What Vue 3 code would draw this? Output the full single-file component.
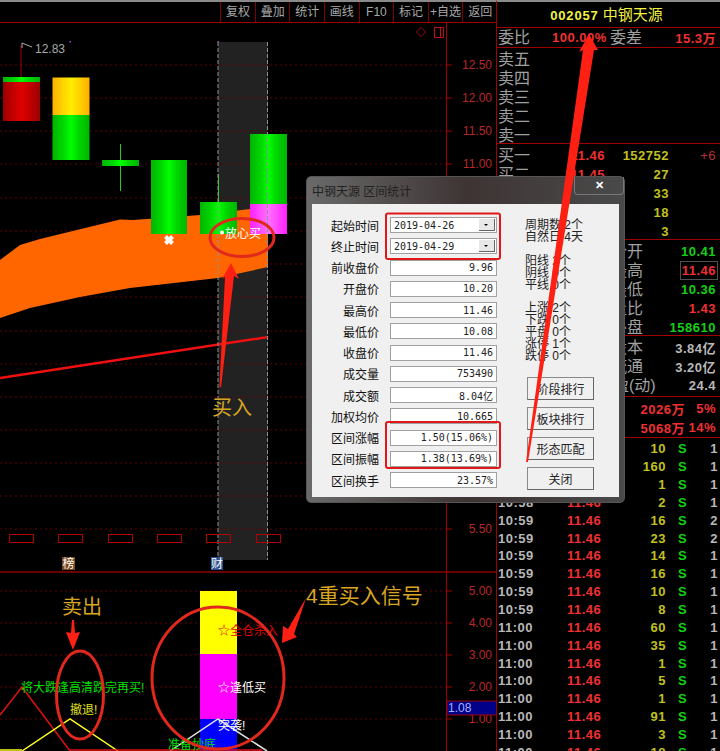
<script setup>
const tools = ['复权', '叠加', '统计', '画线', 'F10', '标记', '+自选', '返回']

// 左侧K线
const gridLines = [65, 98, 131, 164, 198, 231, 264, 297, 331, 364, 397, 430, 463, 496, 529]
const subLines = [591, 623, 655, 687, 719]
const priceLabels = [
  { y: 65, t: '12.50' }, { y: 98, t: '12.00' }, { y: 131, t: '11.50' }, { y: 164, t: '11.00' }, { y: 529, t: '5.50' },
  { y: 591, t: '5.00' }, { y: 623, t: '4.00' }, { y: 655, t: '3.00' }, { y: 687, t: '2.00' }, { y: 719, t: '1.00' }
]
const markers = [9, 58, 108, 157, 206, 256]

// 右侧盘口
const sells = ['卖五', '卖四', '卖三', '卖二', '卖一']
const buys = [
  { name: '买一', price: '11.46', vol: '152752', diff: '+6' },
  { name: '买二', price: '11.45', vol: '27', diff: '' },
  { name: '买三', price: '11.44', vol: '33', diff: '' },
  { name: '买四', price: '11.43', vol: '18', diff: '' },
  { name: '买五', price: '11.42', vol: '3', diff: '' }
]
const quotes = [
  { name: '今开', val: '10.41', cls: 'green' },
  { name: '最高', val: '11.46', cls: 'red boxed' },
  { name: '最低', val: '10.36', cls: 'green' },
  { name: '量比', val: '1.43', cls: 'red' },
  { name: '外盘', val: '158610', cls: 'green' }
]
const ticks = [
  ['10:58', '10', 1], ['10:58', '160', 1], ['10:58', '1', 1], ['10:58', '2', 1],
  ['10:59', '16', 2], ['10:59', '23', 2], ['10:59', '14', 1], ['10:59', '16', 1],
  ['10:59', '10', 1], ['10:59', '8', 1], ['11:00', '60', 1], ['11:00', '35', 1],
  ['11:00', '1', 1], ['11:00', '5', 1], ['11:00', '1', 1], ['11:00', '91', 1],
  ['11:00', '3', 1], ['11:00', '18', 1]
]

// 区间统计弹窗
const fields = [
  { label: '起始时间', val: '2019-04-26', select: true },
  { label: '终止时间', val: '2019-04-29', select: true },
  { label: '前收盘价', val: '9.96' },
  { label: '开盘价', val: '10.20' },
  { label: '最高价', val: '11.46' },
  { label: '最低价', val: '10.08' },
  { label: '收盘价', val: '11.46' },
  { label: '成交量', val: '753490' },
  { label: '成交额', val: '8.04亿' },
  { label: '加权均价', val: '10.665' },
  { label: '区间涨幅', val: '1.50(15.06%)' },
  { label: '区间振幅', val: '1.38(13.69%)' },
  { label: '区间换手', val: '23.57%' }
]
const statGroups = [
  ['周期数 2个', '自然日 4天'],
  ['阳线 2个', '阴线 0个', '平线 0个'],
  ['上涨 2个', '下跌 0个', '平盘 0个', '涨停 1个', '跌停 0个']
]
const buttons = ['阶段排行', '板块排行', '形态匹配', '关闭']
</script>

<template>
  <div class="screen">
    <div class="left">
      <div class="toolbar">
        <span v-for="t in tools" :key="t" class="tool">{{ t }}</span>
      </div>
      <svg class="chart" width="497" height="728" viewBox="0 23 497 728">
        <defs>
          <linearGradient id="gGreen">
            <stop offset="0" stop-color="#00b400" />
            <stop offset="0.3" stop-color="#00d800" />
            <stop offset="0.5" stop-color="#00ff00" />
            <stop offset="0.7" stop-color="#00d800" />
            <stop offset="1" stop-color="#00b400" />
          </linearGradient>
          <linearGradient id="gRed">
            <stop offset="0" stop-color="#9c0000" />
            <stop offset="0.5" stop-color="#e00000" />
            <stop offset="1" stop-color="#9c0000" />
          </linearGradient>
          <linearGradient id="gGold">
            <stop offset="0" stop-color="#ffb000" />
            <stop offset="0.5" stop-color="#ffee00" />
            <stop offset="1" stop-color="#ffb000" />
          </linearGradient>
          <linearGradient id="gPink">
            <stop offset="0" stop-color="#ff20ff" />
            <stop offset="0.5" stop-color="#ff70ff" />
            <stop offset="1" stop-color="#ff20ff" />
          </linearGradient>
        </defs>

        <rect x="218" y="42" width="50" height="518" fill="#222" />

        <line v-for="y in gridLines" :key="y" x1="0" x2="446" :y1="y" :y2="y" class="dots" />
        <line v-for="y in subLines" :key="y" x1="0" x2="446" :y1="y" :y2="y" class="dots" />

        <polygon fill="#ff6600" points="0,260 20,245 40,239 120,219.5 133,220 200,215 250,209 268,205 268,267 218,278 130,288 80,297 30,308 0,318" />
        <line x1="0" y1="378" x2="268" y2="337" stroke="#f01010" stroke-width="2.5" />

        <line x1="21" y1="45" x2="21" y2="77" stroke="#a00000" />
        <rect x="3" y="77" width="37" height="5" fill="url(#gGreen)" />
        <rect x="3" y="82" width="37" height="39" fill="url(#gRed)" />
        <path d="M22 48 V43 M22 43 L32 47" stroke="#aaa" fill="none" />
        <text x="35" y="53" class="axis gray">12.83</text>
        <rect x="69.5" y="41" width="1.5" height="1.5" fill="#b030d0" />
        <rect x="217.5" y="41" width="1.5" height="1.5" fill="#b030d0" />

        <rect x="52.5" y="77.5" width="37" height="37.5" fill="url(#gGold)" />
        <rect x="52.5" y="115" width="37" height="45" fill="url(#gGreen)" />
        <line x1="120.5" y1="144" x2="120.5" y2="191" stroke="#20d020" />
        <rect x="102" y="160" width="37" height="6" fill="url(#gGreen)" />
        <rect x="151" y="160" width="36" height="74" fill="url(#gGreen)" />
        <line x1="218.5" y1="174" x2="218.5" y2="202" stroke="#20d020" />
        <rect x="200" y="202" width="37" height="32" fill="url(#gGreen)" />
        <rect x="250" y="134" width="37" height="70" fill="url(#gGreen)" />
        <rect x="250" y="204" width="37" height="30" fill="url(#gPink)" />

        <line x1="218" y1="42" x2="218" y2="560" class="band" />
        <line x1="267.5" y1="42" x2="267.5" y2="560" class="band" />

        <path d="M165.5 236.5 L172.5 243.5 M172.5 236.5 L165.5 243.5" stroke="#fff" stroke-width="4" />
        <circle cx="222" cy="232.5" r="2" fill="#fff" />
        <text x="225" y="238" class="sig" fill="#fff">放心买</text>

        <rect v-for="x in markers" :key="x" :x="x + 0.5" y="534.5" width="24" height="8" fill="none" stroke="#b00000" />

        <rect x="62" y="557" width="13" height="13" fill="#7a4518" />
        <text x="62.5" y="568" class="tag">榜</text>
        <rect x="211" y="557" width="12" height="13" fill="#2a5090" />
        <text x="211" y="568" class="tag">财</text>

        <line x1="0" y1="572" x2="497" y2="572" stroke="#8c0000" stroke-width="1.5" />

        <rect x="200" y="591" width="37" height="63" fill="#ffff00" />
        <rect x="200" y="654" width="37" height="65" fill="#ff00ff" />
        <rect x="200" y="719" width="37" height="32" fill="#0000ff" />

        <polyline points="0,715 22,687 70,751" fill="none" stroke="#e01010" stroke-width="1.5" />
        <polyline points="22,751 70,719 118,751" fill="none" stroke="#ffff20" stroke-width="1.5" />
        <polyline points="170,751 218,719 267,751" fill="none" stroke="#e0e0e0" stroke-width="1.5" />
        <line x1="70" y1="750" x2="262" y2="750" stroke="#e01010" stroke-width="1.5" />
        <line x1="0" y1="750" x2="22" y2="750" stroke="#ffff20" stroke-width="1.5" />

        <text x="218" y="635" class="sig" fill="#e00000">☆全仓杀入</text>
        <text x="218" y="692" class="sig" fill="#fff">☆逢低买</text>
        <text x="218" y="730" class="sig" fill="#fff">突袭!</text>
        <text x="168" y="749" class="sig" fill="#00e000">准备抄底</text>
        <text x="21" y="692" class="sig" fill="#00e000">将大跌逢高清跌完再买!</text>
        <text x="70" y="714" class="sig" fill="#e0e020">撤退!</text>

        <line x1="446.5" y1="23" x2="446.5" y2="751" stroke="#a00000" />
        <template v-for="p in priceLabels" :key="p.t">
          <line x1="446" x2="452" :y1="p.y" :y2="p.y" stroke="#a00000" />
          <text x="492" :y="p.y + 4" class="axis" text-anchor="end">{{ p.t }}</text>
        </template>

        <path d="M421 27.5 L425.5 32 L421 36.5 L416.5 32 Z" fill="none" stroke="#a01010" />
        <path d="M434.5 27.5 H443.5 V37.5 H434.5 Z M440.5 27.5 V37.5" fill="none" stroke="#c01010" />

        <rect x="447" y="701" width="50" height="14" fill="#000088" stroke="#a00000" />
        <text x="448" y="712" class="axis blue">1.08</text>
      </svg>
    </div>

    <div class="panel">
      <div class="title"><b>002057</b> 中钢天源</div>
      <div class="ratio">
        <span class="lb">委比</span>
        <span class="num red pct">100.00%</span>
        <span class="lb">委差</span>
        <span class="num red end">15.3万</span>
      </div>
      <div class="book sells">
        <div v-for="s in sells" :key="s" class="row"><span class="lb">{{ s }}</span></div>
      </div>
      <div class="book buys">
        <div v-for="b in buys" :key="b.name" class="row">
          <span class="lb">{{ b.name }}</span>
          <span class="num red b-price">{{ b.price }}</span>
          <span class="num olive b-vol">{{ b.vol }}</span>
          <span class="num dimred end">{{ b.diff }}</span>
        </div>
      </div>
      <div class="book quotes">
        <div v-for="q in quotes" :key="q.name" class="row half">
          <span class="lb">{{ q.name }}</span>
          <span class="num end" :class="q.cls">{{ q.val }}</span>
        </div>
      </div>
      <div class="book shares">
        <div class="row half"><span class="lb">股本</span><span class="num gray end">3.84亿</span></div>
        <div class="row half"><span class="lb">流通</span><span class="num gray end">3.20亿</span></div>
        <div class="row half pe"><span class="lb">市盈(动)</span><span class="num gray end">24.4</span></div>
      </div>
      <div class="book flows">
        <div class="row"><span class="num red flow">2026万</span><span class="num red end">5%</span></div>
        <div class="row"><span class="num red flow">5068万</span><span class="num red end">14%</span></div>
      </div>
      <div class="list">
        <div v-for="(t, i) in ticks" :key="i" class="tick">
          <span class="num gray t-time">{{ t[0] }}</span>
          <span class="num red t-price">11.46</span>
          <span class="num olive t-vol">{{ t[1] }}</span>
          <span class="num green t-s">S</span>
          <span class="num gray end">{{ t[2] }}</span>
        </div>
      </div>
    </div>

    <div class="dialog">
      <div class="caption">
        <span>中钢天源 区间统计</span>
        <span class="close">✕</span>
      </div>
      <div class="client">
        <div class="form">
          <template v-for="f in fields" :key="f.label">
            <label>{{ f.label }}</label>
            <div class="field" :class="{ select: f.select }">
              <span>{{ f.val }}</span>
              <i v-if="f.select" class="drop"></i>
            </div>
          </template>
        </div>
        <div class="side">
          <div v-for="(g, i) in statGroups" :key="i" class="stats">
            <div v-for="s in g" :key="s">{{ s }}</div>
          </div>
          <button v-for="b in buttons" :key="b" type="button">{{ b }}</button>
        </div>
      </div>
    </div>

    <svg class="marks" width="720" height="751" viewBox="0 0 720 751">
      <rect x="386" y="213.5" width="114" height="45.5" rx="2" class="box" />
      <rect x="386" y="422" width="114" height="46" rx="2" class="box" />
      <ellipse cx="242" cy="237.5" rx="32" ry="19" class="ring" />
      <ellipse cx="80" cy="695" rx="23.5" ry="44" class="ring" />
      <ellipse cx="218" cy="678" rx="66" ry="71" class="ring" />
      <polygon class="arrow" points="231,263 239,279 234,276 221,387 219.5,387 225,277 222,279" />
      <polygon class="arrow" points="73,650 66,632 71,633 72,620 74,620 75,633 80,632" />
      <polygon class="arrow" points="282,643 283,626 288,629 306,598 294,634 297,637" />
      <polygon class="arrow" points="589,34 598,50 594,50 528,462 526,462 583,50 579,52" />
      <text x="212" y="415" class="note" font-size="20">买入</text>
      <text x="62" y="614" class="note" font-size="20">卖出</text>
      <text x="306" y="603" class="note" font-size="21">4重买入信号</text>
    </svg>
  </div>
</template>

<style>
html, body {
  margin: 0;
  background: #000;
}
</style>

<style scoped>
.screen {
  position: relative;
  display: flex;
  width: 720px;
  height: 751px;
  overflow: hidden;
  background: #000;
  font-family: "Liberation Sans", "Noto Sans CJK SC", sans-serif;
}

/* 左侧 */
.left {
  width: 497px;
  flex: none;
  display: flex;
  flex-direction: column;
}
.toolbar {
  display: flex;
  justify-content: flex-end;
  height: 20px;
  flex: none;
  box-sizing: content-box;
  border-top: 2px solid #8a8a8a;
  border-bottom: 1px solid #a00000;
}
.tool {
  width: 34.6px;
  box-sizing: border-box;
  border-left: 1px solid #7c0000;
  color: #a8a8a8;
  font-size: 12px;
  line-height: 20px;
  text-align: center;
  white-space: nowrap;
}
.chart {
  display: block;
}
.dots {
  stroke: #640000;
  stroke-dasharray: 2 3;
}
.band {
  stroke: #909090;
  stroke-dasharray: 4 2;
}
.axis {
  fill: #b82828;
  font-size: 12px;
}
.axis.gray {
  fill: #a8a8a8;
}
.axis.blue {
  fill: #a8b4ff;
}
.sig {
  font-size: 12px;
}
.tag {
  fill: #fff;
  font-size: 12px;
}

/* 右侧盘口 */
.panel {
  flex: 1;
  display: flex;
  flex-direction: column;
  border-left: 1px solid #a00000;
  border-top: 2px solid #8a8a8a;
  margin-left: -1px;
  font-size: 13px;
}
.title {
  height: 26px;
  flex: none;
  border-bottom: 1px solid #a00000;
  color: #f2f240;
  font-size: 15px;
  line-height: 26px;
  text-align: center;
  padding-right: 4px;
  box-sizing: border-box;
}
.title b {
  font-size: 13px;
  letter-spacing: 0.8px;
}
.ratio {
  display: flex;
  align-items: center;
  height: 20px;
  flex: none;
  box-sizing: border-box;
  border-bottom: 1px solid #a00000;
  padding: 0 4px 0 1px;
}
.pct {
  margin-left: 22px;
  width: 58px;
}
.book {
  display: flex;
  flex-direction: column;
  flex: none;
  border-bottom: 1px solid #a00000;
  box-sizing: border-box;
  padding: 1.5px 4px 0 1px;
}
.sells {
  height: 96px;
}
.buys {
  height: 96px;
}
.quotes {
  height: 96px;
}
.shares {
  height: 61px;
  padding-top: 2px;
}
.flows {
  height: 41px;
}
.row {
  display: flex;
  align-items: center;
  height: 19px;
  flex: none;
}
.half {
  padding-left: 113px;
}
.half.pe {
  padding-left: 99px;
}
.b-price {
  width: 75px;
  text-align: right;
}
.b-vol {
  width: 64px;
  text-align: right;
}
.flow {
  width: 187px;
  text-align: right;
}
.list {
  padding: 2px 2px 0 1px;
}
.tick {
  display: flex;
  align-items: center;
  height: 17.85px;
}
.t-time {
  width: 69px;
}
.t-price {
  width: 60px;
  flex: none;
}
.t-vol {
  width: 39px;
  text-align: right;
}
.t-s {
  width: 20px;
  margin-left: 12px;
}
.lb {
  color: #a0a0a0;
  font-size: 16px;
  line-height: 19px;
  white-space: nowrap;
}
.num {
  font-weight: 700;
  font-size: 13px;
  letter-spacing: 0.5px;
  white-space: nowrap;
}
.end {
  margin-left: auto;
}
.red {
  color: #f03030;
}
.dimred {
  color: #b83030;
  font-weight: 400;
}
.green {
  color: #14d014;
}
.olive {
  color: #c0c020;
}
.gray {
  color: #b8b8b8;
}
.boxed {
  outline: 1px solid #505050;
  outline-offset: 1px;
}

/* 区间统计弹窗 */
.dialog {
  position: absolute;
  left: 306px;
  top: 176px;
  width: 319px;
  height: 327px;
  box-sizing: border-box;
  padding: 0 5px 6px;
  display: flex;
  flex-direction: column;
  border: 1px solid #555;
  border-radius: 5px;
  background: linear-gradient(90deg, #6a6a6a, #3e3434 50%, #4a4a4a);
}
.caption {
  display: flex;
  align-items: center;
  justify-content: space-between;
  height: 27px;
  flex: none;
  color: #222;
  font-size: 12px;
}
.close {
  width: 48px;
  height: 17px;
  margin: -10px -5px 0 0;
  border: 1px solid #777;
  border-top: none;
  border-radius: 0 0 4px 4px;
  color: #fff;
  font-size: 11px;
  font-weight: 700;
  line-height: 17px;
  text-align: center;
}
.client {
  flex: 1;
  display: flex;
  gap: 28px;
  background: #f0f0f0;
  padding-top: 13px;
}
.form {
  display: grid;
  grid-template-columns: 67px 107px;
  column-gap: 11px;
  grid-auto-rows: 16px;
  row-gap: 5.25px;
  align-items: center;
}
.form label {
  color: #111;
  font-size: 12px;
  text-align: right;
  white-space: nowrap;
}
.field {
  display: flex;
  align-items: center;
  justify-content: flex-end;
  height: 16px;
  box-sizing: border-box;
  padding: 0 3px;
  border: 1px solid #a0a0a0;
  background: #fff;
  color: #222;
  font-family: "DejaVu Sans Mono", "Noto Sans CJK SC", monospace;
  font-size: 10px;
  white-space: nowrap;
}
.field.select {
  justify-content: space-between;
}
.drop {
  position: relative;
  width: 16px;
  height: 12px;
  margin-right: -2px;
  background: #e8e8e8;
  border-right: 1px solid #666;
  border-bottom: 1px solid #666;
  box-sizing: border-box;
}
.drop::after {
  content: "";
  position: absolute;
  left: 5px;
  top: 5px;
  border: 2.5px solid transparent;
  border-top-color: #000;
}
.side {
  display: flex;
  flex-direction: column;
  padding-top: 2px;
}
.stats {
  color: #222;
  font-size: 12px;
  line-height: 12px;
  margin-bottom: 11.5px;
  white-space: nowrap;
}
.stats:last-of-type {
  margin-bottom: 15px;
}
.side button {
  width: 67px;
  height: 23px;
  margin: 0 0 7px 2px;
  padding: 0;
  flex: none;
  background: #f0f0f0;
  border: 1px solid #8a8a8a;
  border-right-color: #666;
  border-bottom-color: #666;
  color: #222;
  font-family: inherit;
  font-size: 12px;
}

/* 红色标注 */
.marks {
  position: absolute;
  left: 0;
  top: 0;
  pointer-events: none;
}
.box {
  fill: none;
  stroke: #e01818;
  stroke-width: 2;
}
.ring {
  fill: none;
  stroke: #e0281c;
  stroke-width: 3;
}
.arrow {
  fill: #ff2014;
}
.note {
  fill: #d8a520;
}
</style>
